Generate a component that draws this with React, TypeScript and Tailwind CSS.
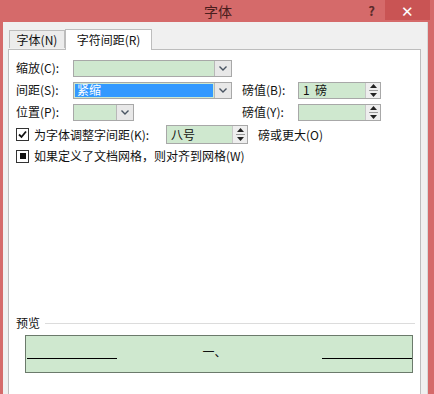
import React from 'react';

const FONT = { fontFamily: '"Noto Sans CJK SC", "Noto Sans", sans-serif' };

const Chevron = () => (
  <svg width="8" height="5" viewBox="0 0 8 5" aria-hidden="true">
    <path d="M0.5 0.5 L4 4 L7.5 0.5" fill="none" stroke="#4a5563" strokeWidth="1.4" />
  </svg>
);

const Combo: React.FC<{ width: string; value?: string; selected?: boolean }> = ({
  width,
  value,
  selected,
}) => (
  <div className={`flex h-[17px] ${width} border border-[#a8a8a8] bg-[#cfe8cf]`}>
    <div className="flex flex-1 items-center px-px py-px">
      {selected ? (
        <div className="flex h-full flex-1 items-center bg-[#3399ff] pl-[2px] text-white">
          {value}
        </div>
      ) : (
        <span className="pl-[2px]">{value}</span>
      )}
    </div>
    <div className="flex w-[17px] items-center justify-center border-l border-[#b8b8b8] bg-[#e8e8e8]">
      <Chevron />
    </div>
  </div>
);

const Spin: React.FC<{ width: string; height?: string; value?: string }> = ({
  width,
  height = 'h-[17px]',
  value,
}) => (
  <div className={`flex ${height} ${width} border border-[#a8a8a8] bg-[#cfe8cf]`}>
    <div className="flex flex-1 items-center whitespace-pre pl-[4px]">{value}</div>
    <div className="flex w-[15px] flex-col items-center justify-center gap-[2px] border-l border-[#c8c8c8] bg-[#eeeeee]">
      <svg width="7" height="4" viewBox="0 0 7 4" aria-hidden="true">
        <path d="M3.5 0 L7 4 L0 4 Z" fill="#222" />
      </svg>
      <div className="h-px w-[9px] bg-[#999]" />
      <svg width="7" height="4" viewBox="0 0 7 4" aria-hidden="true">
        <path d="M0 0 L7 0 L3.5 4 Z" fill="#222" />
      </svg>
    </div>
  </div>
);

const Check: React.FC<{ mode: 'checked' | 'mixed' }> = ({ mode }) => (
  <div className="flex h-[13px] w-[13px] items-center justify-center border border-[#333] bg-white">
    {mode === 'checked' ? (
      <svg width="9" height="9" viewBox="0 0 9 9" aria-hidden="true">
        <path d="M1 4.5 L3.5 7 L8 1.5" fill="none" stroke="#111" strokeWidth="1.8" />
      </svg>
    ) : (
      <div className="h-[6px] w-[6px] bg-[#111]" />
    )}
  </div>
);

export default function App() {
  return (
    <div
      className="flex h-[394px] w-[434px] flex-col overflow-hidden bg-[#d56a6a] text-[12px] leading-none text-[#111]"
      style={FONT}
    >
      {/* title bar */}
      <div className="grid h-[22px] grid-cols-[1fr_auto_1fr] items-center">
        <div />
        <div className="pl-[2px] text-[14px] text-[#4a1e1e]">字体</div>
        <div className="flex h-full items-start justify-end pr-[4px]">
          <div className="mr-[10px] pt-[4px] text-[13px] font-bold text-[#5a2a2a]">?</div>
          <div className="flex h-[20px] w-[45px] items-center justify-center bg-[#c95454] text-[15px] text-white">
            ✕
          </div>
        </div>
      </div>

      {/* body */}
      <div className="ml-[3px] mr-[6px] flex flex-1 flex-col border-r border-[#d8d8d8] bg-[#f0f0f0] pl-[5px] pr-[6px] pt-[7px]">
        <div className="relative z-10 flex h-[20px] items-end">
          <div className="mb-px ml-px flex h-[18px] w-[56px] items-center justify-center border border-b-0 border-[#bdbdbd] bg-[#ececec]">
            字体(N)
          </div>
          <div className="-mb-px flex h-[21px] w-[87px] items-center justify-center border border-b-0 border-[#bdbdbd] bg-white">
            字符间距(R)
          </div>
        </div>

        <div className="flex flex-1 flex-col border border-b-0 border-[#bdbdbd] bg-white pl-[7px] pr-[5px] pt-[7px]">
          <div className="flex h-[22px] items-center">
            <span className="w-[57px]">缩放(C):</span>
            <Combo width="w-[159px]" />
          </div>
          <div className="flex h-[22px] items-center">
            <span className="w-[57px]">间距(S):</span>
            <Combo width="w-[159px]" value="紧缩" selected />
            <span className="ml-[10px] w-[56px]">磅值(B):</span>
            <Spin width="w-[83px]" value="1  磅" />
          </div>
          <div className="flex h-[22px] items-center">
            <span className="w-[57px]">位置(P):</span>
            <Combo width="w-[61px]" />
            <span className="ml-[108px] w-[56px]">磅值(Y):</span>
            <Spin width="w-[83px]" />
          </div>
          <div className="flex h-[23px] items-center">
            <Check mode="checked" />
            <span className="ml-[5px] w-[132px]">为字体调整字间距(K):</span>
            <Spin width="w-[82px]" height="h-[19px]" value="八号" />
            <span className="ml-[10px]">磅或更大(O)</span>
          </div>
          <div className="flex h-[20px] items-center">
            <Check mode="mixed" />
            <span className="ml-[5px]">如果定义了文档网格，则对齐到网格(W)</span>
          </div>

          <div className="mt-[149px] flex h-[16px] items-center">
            <span>预览</span>
            <div className="ml-[5px] h-px flex-1 bg-[#dcdcdc]" />
          </div>
          <div className="ml-[9px] mr-[2px] mt-[4px] flex h-[38px] items-start border border-[#6b7a6b] bg-[#cfe8cf]">
            <div className="ml-px mt-[22px] h-px w-[90px] bg-black" />
            <div className="mt-[10px] flex flex-1 justify-center pr-[10px]">一、</div>
            <div className="mt-[22px] h-px w-[90px] bg-black" />
          </div>
        </div>
      </div>
    </div>
  );
}
